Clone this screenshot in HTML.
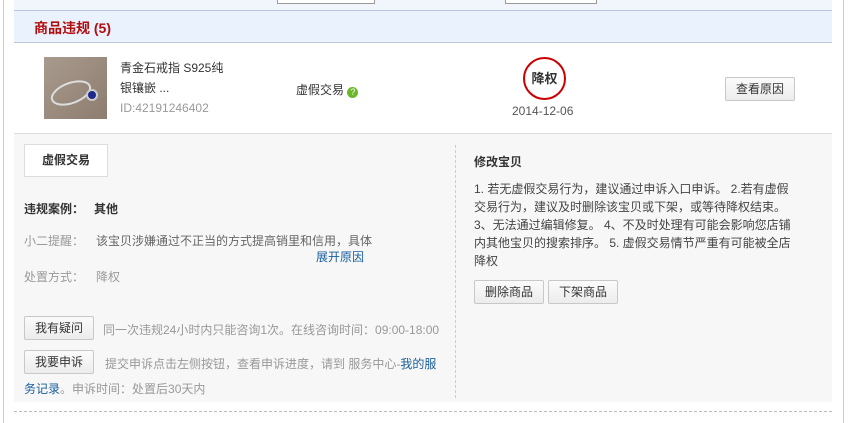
<!DOCTYPE html>
<html><head><meta charset="utf-8"><style>
*{margin:0;padding:0;box-sizing:border-box}
body{width:849px;height:423px;background:#fff;position:relative;overflow:hidden;font-family:"Liberation Sans","Noto Sans CJK SC",sans-serif;font-size:12px;color:#333}
.a{position:absolute;white-space:nowrap}
.btn{position:absolute;height:24px;border:1px solid #c8c8c8;background:linear-gradient(#fbfbfb,#ececec);border-radius:2px;font-size:12px;color:#333;text-align:center;line-height:22px}
.g{color:#999}
</style></head><body>
<div class="a" style="left:3px;top:0;width:1px;height:423px;background:#ccc"></div>
<div class="a" style="left:843px;top:0;width:1px;height:423px;background:#ccc"></div>
<div class="a" style="left:14px;top:0;width:818px;height:10px;background:#f1f6fd"></div>
<div class="a" style="left:277px;top:-4px;width:98px;height:8px;border:1px solid #999;background:#fff"></div>
<div class="a" style="left:505px;top:-4px;width:92px;height:8px;border:1px solid #999;background:#fff"></div>
<div class="a" style="left:14px;top:10px;width:818px;height:33px;background:#eaf2fe;border-top:1px solid #b8c9de;border-bottom:1px solid #b8c9de"></div>
<div class="a" style="left:34px;top:18px;font-size:14px;font-weight:bold;color:#b20d0d">商品违规 (5)</div>
<div class="a" style="left:44px;top:57px;width:63px;height:62px;background:linear-gradient(135deg,#a89a8c,#8d7d70);"></div>
<svg class="a" style="left:44px;top:57px" width="63" height="62"><ellipse cx="27" cy="36" rx="20" ry="10" fill="none" stroke="#ddd" stroke-width="2" transform="rotate(-20 27 36)"/><circle cx="48" cy="38" r="5" fill="#1d2a8a" stroke="#ccc" stroke-width="2"/></svg>
<div class="a" style="left:120px;top:58px;line-height:20px;color:#333">青金石戒指 S925纯<br>银镶嵌 ...<br><span class="g">ID:42191246402</span></div>
<div class="a" style="left:296px;top:81px">虚假交易 <span style="display:inline-block;width:11px;height:11px;border-radius:50%;background:#6bb82a;color:#fff;font-size:9px;line-height:11px;text-align:center;vertical-align:-1px">?</span></div>
<div class="a" style="left:523px;top:57px;width:43px;height:43px;border:2px solid #c00;border-radius:50%;text-align:center;line-height:39px;font-weight:bold;font-size:13px">降权</div>
<div class="a" style="left:512px;top:104px;color:#555">2014-12-06</div>
<div class="btn" style="left:725px;top:77px;width:70px">查看原因</div>
<div class="a" style="left:14px;top:133px;width:818px;height:269px;background:#f7f7f7;border-top:1px solid #ddd"></div>
<div class="a" style="left:14px;top:411px;width:818px;border-top:1px dashed #bbb"></div>
<div class="a" style="left:455px;top:145px;height:253px;border-left:1px dashed #ccc"></div>
<div class="a" style="left:24px;top:144px;width:84px;height:33px;background:#fff;border:1px solid #ddd;text-align:center;line-height:31px;font-weight:bold">虚假交易</div>
<div class="a" style="left:24px;top:200px;font-weight:bold">违规案例：&nbsp;&nbsp;&nbsp;其他</div>
<div class="a g" style="left:24px;top:232px">小二提醒：</div>
<div class="a" style="left:96px;top:232px;color:#666">该宝贝涉嫌通过不正当的方式提高销里和信用，具体</div>
<div class="a" style="left:316px;top:248px;color:#1a5e9c">展开原因</div>
<div class="a g" style="left:24px;top:268px">处置方式：</div>
<div class="a g" style="left:96px;top:268px">降权</div>
<div class="btn" style="left:24px;top:316px;width:70px">我有疑问</div>
<div class="a g" style="left:103px;top:321px">同一次违规24小时内只能咨询1次。在线咨询时间：09:00-18:00</div>
<div class="btn" style="left:24px;top:350px;width:70px">我要申诉</div>
<div class="a g" style="left:105px;top:355px">提交申诉点击左侧按钮，查看申诉进度，请到 服务中心-<span style="color:#1a5e9c">我的服</span></div>
<div class="a g" style="left:24px;top:380px"><span style="color:#1a5e9c">务记录</span>。申诉时间：处置后30天内</div>
<div class="a" style="left:474px;top:153px;font-weight:bold">修改宝贝</div>
<div class="a" style="left:474px;top:180px;line-height:18px;color:#444">1. 若无虚假交易行为，建议通过申诉入口申诉。 2.若有虚假<br>交易行为，建议及时删除该宝贝或下架，或等待降权结束。<br>3、无法通过编辑修复。 4、不及时处理有可能会影响您店铺<br>内其他宝贝的搜索排序。 5. 虚假交易情节严重有可能被全店<br>降权</div>
<div class="btn" style="left:474px;top:280px;width:70px">删除商品</div>
<div class="btn" style="left:548px;top:280px;width:70px">下架商品</div>
</body></html>
